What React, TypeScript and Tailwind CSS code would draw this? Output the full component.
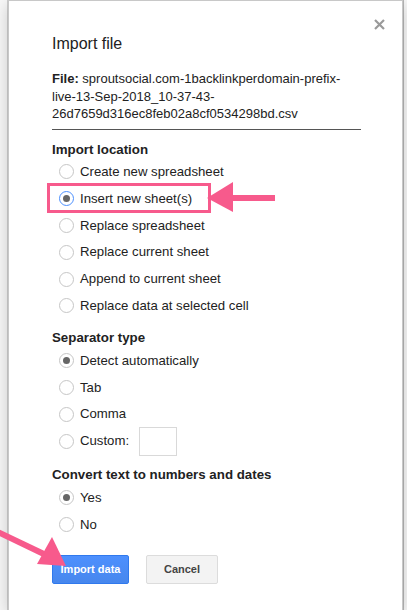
import React, { useState } from 'react';

const font = { fontFamily: '"Liberation Sans", Arial, sans-serif' };

const Radio: React.FC<{ checked?: boolean; focused?: boolean }> = ({ checked, focused }) => (
  <span
    className={`w-[15px] h-[15px] rounded-full border bg-white flex items-center justify-center shrink-0 ${
      focused ? 'border-[#4d90fe]' : 'border-[#c6c6c6]'
    }`}
  >
    {checked && <span className="w-[7px] h-[7px] rounded-full bg-[#666]" />}
  </span>
);

const Option: React.FC<{ label: string; checked?: boolean; focused?: boolean; children?: React.ReactNode }> = ({
  label,
  checked,
  focused,
  children,
}) => (
  <div className="h-[26.8px] flex items-center gap-[6px] pl-[7px]">
    <Radio checked={checked} focused={focused} />
    <span className="text-[13.2px] text-[#222]">{label}</span>
    {children}
  </div>
);

export default function App() {
  const [location] = useState('insert');

  return (
    <div className="relative w-[407px] h-[610px] overflow-hidden bg-[#f4f4f4]" style={font}>
      {/* Spreadsheet behind */}
      <div className="absolute inset-y-0 left-0 w-[8px] bg-[#f8f8f8] border-r border-[#d0d0d0]" />
      <div className="absolute inset-y-0 right-0 w-[4px] bg-[#f8f8f8] border-l border-[#b8b8b8]" />

      {/* Dialog */}
      <div className="relative ml-[8px] w-[395px] h-[610px] bg-white border-t border-l border-r border-[#c8c8c8] shadow-[0_4px_16px_rgba(0,0,0,0.2)]">
        <button className="absolute right-[17px] top-[18px]">
          <svg width="11" height="11" viewBox="0 0 11 11" className="block">
            <path d="M1 1 L10 10 M10 1 L1 10" stroke="#9a9a9a" strokeWidth="2.2" />
          </svg>
        </button>

        <div className="pl-[43px] pr-[35px] pt-[32px]">
          <h2 className="text-[16px] text-[#222] leading-[22px]">Import file</h2>

          <p className="mt-[15px] text-[13px] leading-[17.5px] text-[#222]">
            <b>File:</b> sproutsocial.com-1backlinkperdomain-prefix-
            <br />
            live-13-Sep-2018_10-37-43-
            <br />
            26d7659d316ec8feb02a8cf0534298bd.csv
          </p>
          <div className="mt-[6px] w-[309px] border-t border-[#555]" />

          <h3 className="mt-[11px] text-[13.3px] font-bold text-[#222] leading-[18px]">Import location</h3>
          <div>
            <Option label="Create new spreadsheet" checked={location === 'new'} />
            <Option label="Insert new sheet(s)" checked={location === 'insert'} focused />
            <Option label="Replace spreadsheet" />
            <Option label="Replace current sheet" />
            <Option label="Append to current sheet" />
            <Option label="Replace data at selected cell" />
          </div>

          <h3 className="mt-[10px] text-[13.3px] font-bold text-[#222] leading-[18px]">Separator type</h3>
          <div>
            <Option label="Detect automatically" checked />
            <Option label="Tab" />
            <Option label="Comma" />
            <Option label="Custom:">
              <span className="ml-[4px] w-[38px] h-[29px] shrink-0 border border-[#d9d9d9] bg-white" />
            </Option>
          </div>

          <h3 className="mt-[12px] text-[13.3px] font-bold text-[#222] leading-[18px]">Convert text to numbers and dates</h3>
          <div>
            <Option label="Yes" checked />
            <Option label="No" />
          </div>

          <div className="mt-[17px] flex gap-[17px]">
            <button className="w-[77px] h-[29px] rounded-[2px] border border-[#3079ed] bg-gradient-to-b from-[#4d90fe] to-[#4787ed] text-white text-[11px] font-bold">
              Import data
            </button>
            <button className="w-[72px] h-[29px] rounded-[2px] border border-[#dcdcdc] bg-[#f3f3f3] text-[#444] text-[11px] font-bold">
              Cancel
            </button>
          </div>
        </div>
      </div>

      {/* Annotation: highlight box and arrows */}
      <div className="absolute left-[47px] top-[183px] w-[164px] h-[30px] border-[3px] border-[#f75a8c]" />
      <svg className="absolute left-0 top-0" width="407" height="610" viewBox="0 0 407 610">
        <polygon points="207,198 233,182 233,212" fill="#f75a8c" />
        <rect x="230" y="195" width="45" height="6" fill="#f75a8c" />
        <line x1="-2" y1="532" x2="48" y2="556" stroke="#f75a8c" strokeWidth="6" />
        <polygon points="66,566 37,564 52,537" fill="#f75a8c" />
      </svg>
    </div>
  );
}
